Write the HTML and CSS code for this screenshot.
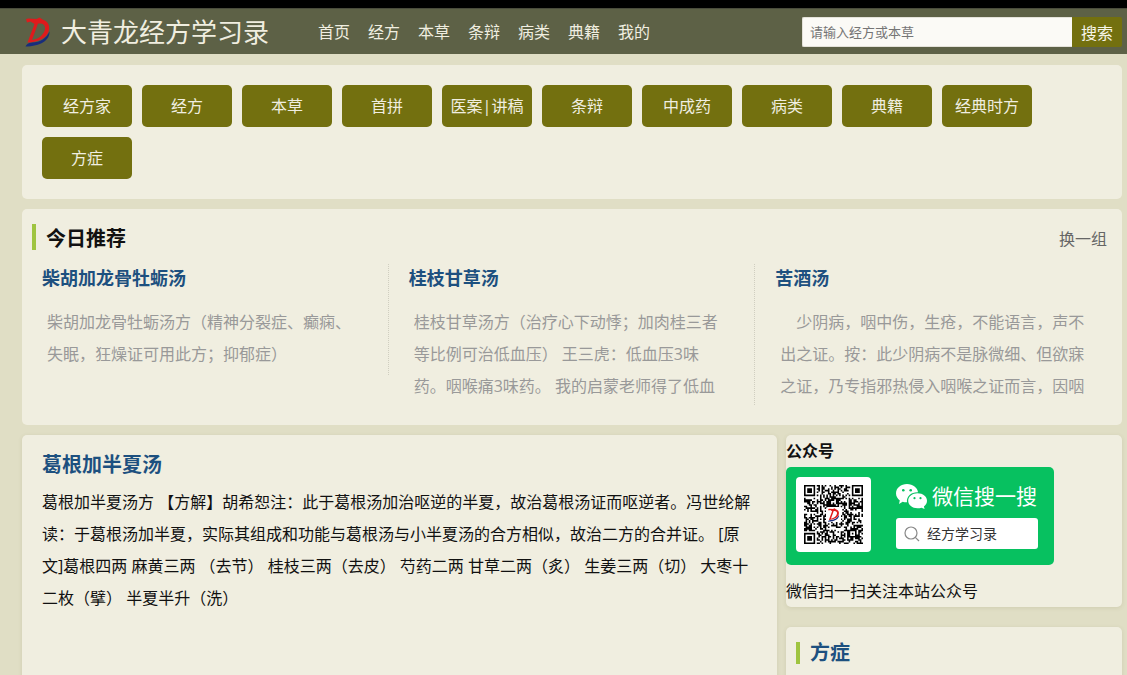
FILE: index.html
```html
<!DOCTYPE html>
<html lang="zh-CN">
<head>
<meta charset="utf-8">
<title>大青龙经方学习录</title>
<link rel="stylesheet" href="styles.css">
</head>
<body>
<svg class="defs" width="0" height="0" aria-hidden="true">
  <symbol id="logo" viewBox="0 0 26 30">
    <path fill="#182d7c" d="M1 29.500C2 27 4 26 7 25.500C16 25.500 22 21 25 14.500C25.500 23 16 29.500 1 29.500Z"/>
    <path fill="#e01a1c" fill-rule="evenodd" d="M1.500 2L4 1.500L12 2L15 0.500L18 2.500C23 4 25.500 8 24.500 13C23 21 14 25 3 25.500L10 7L6 4.500L2.500 5.500ZM13.500 6.500L7.500 23C14 22 19.500 18 20.500 12C21 8 18.500 6 13.500 6.500Z"/>
  </symbol>
</svg>
<header class="topbar">
  <a class="brand" href="#"><svg class="brand-logo" aria-hidden="true"><use href="#logo"/></svg><span>大青龙经方学习录</span></a>
  <nav class="nav">
    <a href="#">首页</a><a href="#">经方</a><a href="#">本草</a><a href="#">条辩</a><a href="#">病类</a><a href="#">典籍</a><a href="#">我的</a>
  </nav>
  <form class="search">
    <input class="search-input" type="text" placeholder="请输入经方或本草" aria-label="请输入经方或本草">
    <button class="search-button" type="button">搜索</button>
  </form>
</header>
<main class="page">
  <section class="card tags">
    <a class="tag" href="#">经方家</a>
    <a class="tag" href="#">经方</a>
    <a class="tag" href="#">本草</a>
    <a class="tag" href="#">首拼</a>
    <a class="tag" href="#">医案|讲稿</a>
    <a class="tag" href="#">条辩</a>
    <a class="tag" href="#">中成药</a>
    <a class="tag" href="#">病类</a>
    <a class="tag" href="#">典籍</a>
    <a class="tag" href="#">经典时方</a>
    <a class="tag" href="#">方症</a>
  </section>

  <section class="card picks">
    <div class="picks-head">
      <h2 class="marked">今日推荐</h2>
      <a class="refresh" href="#">换一组</a>
    </div>
    <div class="picks-list">
      <article class="pick">
        <h3><a href="#">柴胡加龙骨牡蛎汤</a></h3>
        <p>柴胡加龙骨牡蛎汤方（精神分裂症、癫痫、失眠，狂燥证可用此方；抑郁症）</p>
      </article>
      <article class="pick">
        <h3><a href="#">桂枝甘草汤</a></h3>
        <p>桂枝甘草汤方（治疗心下动悸；加肉桂三者等比例可治低血压） 王三虎：低血压3味药。咽喉痛3味药。 我的启蒙老师得了低血</p>
      </article>
      <article class="pick">
        <h3><a href="#">苦酒汤</a></h3>
        <p>　少阴病，咽中伤，生疮，不能语言，声不出之证。按：此少阴病不是脉微细、但欲寐之证，乃专指邪热侵入咽喉之证而言，因咽</p>
      </article>
    </div>
  </section>

  <div class="columns">
    <article class="card detail">
      <h2><a href="#">葛根加半夏汤</a></h2>
      <p>葛根加半夏汤方 【方解】胡希恕注：此于葛根汤加治呕逆的半夏，故治葛根汤证而呕逆者。冯世纶解读：于葛根汤加半夏，实际其组成和功能与葛根汤与小半夏汤的合方相似，故治二方的合并证。 [原文]葛根四两 麻黄三两 （去节） 桂枝三两（去皮） 芍药二两 甘草二两（炙） 生姜三两（切） 大枣十二枚（擘） 半夏半升（洗）</p>
    </article>
    <aside class="side">
      <section class="card account">
        <h3>公众号</h3>
        <div class="wechat">
          <svg class="qr" id="qr" viewBox="0 0 75 75" role="img" aria-label="公众号二维码"></svg>
          <div class="wechat-info">
            <div class="wechat-title">
              <svg class="wechat-icon" viewBox="0 0 31 25" aria-hidden="true">
                <path fill="#fff" d="M11 0C17 0 21.500 3.700 22 8.300C15.500 8 10.300 12 11 18.300C9.500 18.400 8 18.200 6.700 17.800L3 20L3.800 16.500C1.500 14.800 0 12.300 0 9.300C0 4 5 0 11 0Z"/>
                <path fill="#fff" d="M21.500 9.200C27 9.200 31 12.600 31 16.700C31 19.200 29.800 21 27.900 22.400L28.600 25L25.500 23.700C24.300 24.100 23 24.200 21.500 24.200C16.300 24.200 12.200 20.900 12.200 16.700C12.200 12.600 16.300 9.200 21.500 9.200Z"/>
                <g fill="#07c160"><circle cx="7.300" cy="6.300" r="1.300"/><circle cx="14.700" cy="6.300" r="1.300"/><circle cx="18.500" cy="14.200" r="1.100"/><circle cx="24.500" cy="14.200" r="1.100"/></g>
              </svg>
              <span>微信搜一搜</span>
            </div>
            <div class="wechat-box">
              <svg class="lens" viewBox="0 0 16 16" aria-hidden="true"><circle cx="7" cy="7" r="6" fill="none" stroke="#888" stroke-width="1.200"/><path d="M11.300 11.300L15 15" stroke="#888" stroke-width="1.200"/></svg>
              <span>经方学习录</span>
            </div>
          </div>
        </div>
        <p>微信扫一扫关注本站公众号</p>
      </section>
      <section class="card symptoms">
        <h2 class="marked"><a href="#">方症</a></h2>
      </section>
    </aside>
  </div>
</main>
<script src="qr.js"></script>
</body>
</html>
```

FILE: qr.js
```js
// Draws the code's modules: three finder squares, timing lines, data, centre logo.
(function () {
  var n = 37, size = 59, off = 8, seed = 20;
  function rand() {
    seed = (seed * 1103515245 + 12345) % 2147483648;
    return seed / 2147483648;
  }
  function finder(x, y) {
    var origins = [[0, 0], [n - 7, 0], [0, n - 7]];
    for (var i = 0; i < 3; i++) {
      var dx = x - origins[i][0], dy = y - origins[i][1];
      if (dx >= -1 && dx <= 7 && dy >= -1 && dy <= 7) {
        var d = Math.max(Math.abs(dx - 3), Math.abs(dy - 3));
        return d < 2 || d === 3;
      }
    }
    return null;
  }
  function dark(x, y) {
    var bit = rand() < 0.52, f = finder(x, y);
    if (f !== null) return f;
    var a = Math.max(Math.abs(x - 30), Math.abs(y - 30));
    if (a <= 2) return a !== 1;
    if (x === 6) return y % 2 === 0;
    if (y === 6) return x % 2 === 0;
    return bit;
  }
  var d = "";
  for (var y = 0; y < n; y++) {
    for (var x = 0; x < n; x++) {
      if (dark(x, y)) d += "M" + x + " " + y + "h1v1h-1z";
    }
  }
  document.getElementById("qr").innerHTML =
    '<rect width="75" height="75" rx="4" fill="#fff"/>' +
    '<path transform="translate(' + off + ' ' + off + ') scale(' + size / n + ')" d="' + d + '"/>' +
    '<rect x="30" y="30" width="15" height="15" rx="2" fill="#fff"/>' +
    '<use href="#logo" x="31" y="31" width="13" height="14"/>';
})();
```

FILE: styles.css
```css
* { box-sizing: border-box; }

body {
  margin: 0;
  border-top: 8px solid #000;
  background: #e0dec5;
  color: #111;
  font-family: "Open Sans", "Noto Sans CJK SC", sans-serif;
  font-size: 16px;
  line-height: 32px;
}

h2, h3, p { margin: 0; }
a { color: inherit; text-decoration: none; }
.defs { position: absolute; }

.topbar {
  display: flex;
  align-items: center;
  height: 46px;
  padding: 0 5px 0 24px;
  border-top: 1px solid #4a4c3c;
  background: #5d6146;
  color: #f0eee0;
}

.brand {
  display: flex;
  align-items: center;
  gap: 10px;
  font-size: 26px;
}
.brand-logo { width: 27px; height: 30px; }

.nav { display: flex; gap: 18px; margin-left: 49px; }

.search { display: flex; margin-left: auto; }
.search-input {
  width: 270px;
  height: 30px;
  padding: 0 7px;
  border: 1px solid #e4e2da;
  border-right: 0;
  border-radius: 2px 0 0 2px;
  background: #fbfaf6;
  font: 13px "Open Sans", "Noto Sans CJK SC", sans-serif;
}
.search-input::placeholder { color: #757575; }
.search-button {
  width: 50px;
  height: 30px;
  padding: 0;
  border: 0;
  border-radius: 0 2px 2px 0;
  background: #73700f;
  color: #f7f6ea;
  font: 16px "Open Sans", "Noto Sans CJK SC", sans-serif;
}

.page { padding: 11px 5px 0 22px; }

.card {
  border-radius: 5px;
  background: #f0eee0;
}

.tags {
  display: flex;
  flex-wrap: wrap;
  gap: 10px;
  padding: 20px;
}
.tag {
  width: 90px;
  border-radius: 5px;
  background: #73700f;
  color: #f0eee0;
  line-height: 42px;
  text-align: center;
}

.picks { margin-top: 10px; padding: 15px 0 20px; }
.picks-head {
  display: flex;
  align-items: center;
  justify-content: space-between;
  margin-bottom: 14px;
  padding: 0 15px 0 10px;
}
.marked {
  padding-left: 10px;
  border-left: 4px solid #9fc440;
  font-size: 20px;
  line-height: 22px;
}
.picks .marked { padding-top: 4px; }
.refresh { padding-top: 4px; color: #666; line-height: 22px; }

.picks-list {
  display: grid;
  grid-template-columns: repeat(3, 1fr);
  align-items: start;
}
.pick { padding: 0 20px 5px; border-right: 1px dotted #d0cec0; }
.pick:last-child { border-right: 0; }
.pick h3 {
  margin-bottom: 14px;
  color: #1d507f;
  font-size: 18px;
  line-height: 28px;
}
.pick p {
  max-height: 94px;
  padding: 0 10px 0 5px;
  overflow: hidden;
  color: #999;
}

.columns {
  display: grid;
  grid-template-columns: minmax(0, 1fr) 336px;
  gap: 9px;
  margin-top: 10px;
}
.columns .card { box-shadow: 0 1px 4px rgba(90, 90, 40, 0.12); }

.detail { padding: 15px 20px 20px; }
.detail h2 {
  margin-bottom: 6px;
  color: #1d507f;
  font-size: 20px;
  line-height: 30px;
}

.side { display: flex; flex-direction: column; gap: 20px; }
.account h3 { font-size: 16px; }
.account p { padding: 10px 0 0; }

.wechat {
  display: flex;
  gap: 25px;
  width: 268px;
  padding: 10px 10px 13px;
  border-radius: 5px;
  background: #07c160;
}
.qr { width: 75px; height: 75px; }
.wechat-info { flex: 1; }
.wechat-title {
  display: flex;
  align-items: center;
  gap: 5px;
  height: 38px;
  margin-bottom: 3px;
  color: #fff;
  font-size: 21px;
  white-space: nowrap;
}
.wechat-icon { width: 31px; height: 25px; }
.wechat-box {
  display: flex;
  align-items: center;
  gap: 7px;
  width: 142px;
  height: 31px;
  padding: 0 8px;
  border-radius: 3px;
  background: #fff;
  color: #333;
  font-size: 14px;
}
.lens { width: 16px; height: 16px; }

.symptoms { min-height: 120px; padding: 15px 10px; color: #1d507f; }
```
